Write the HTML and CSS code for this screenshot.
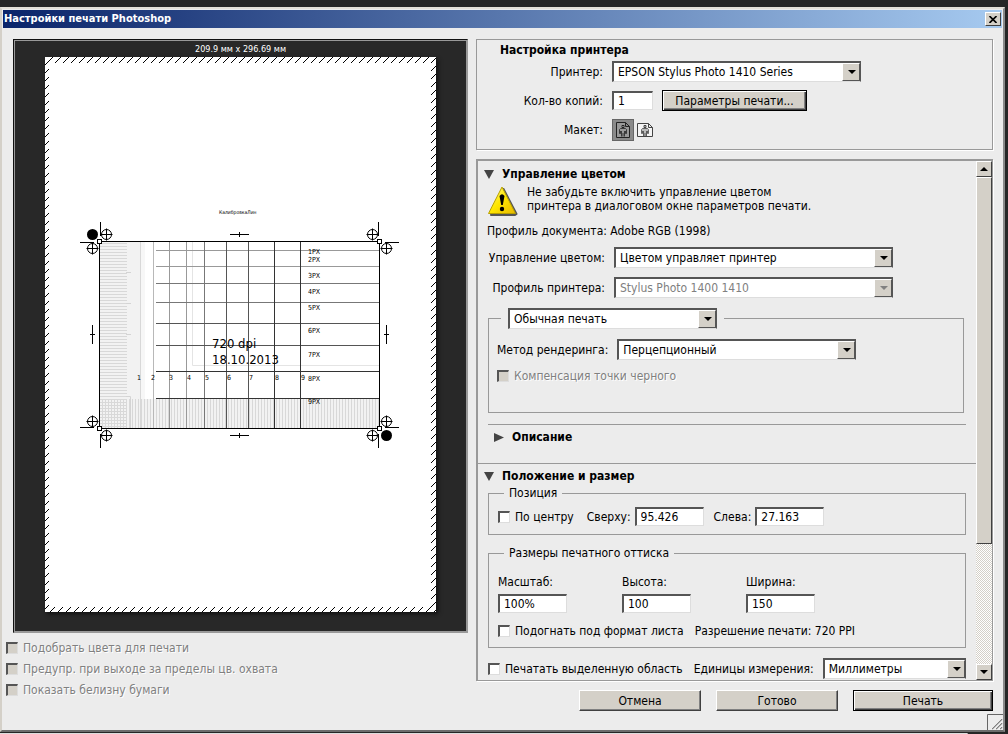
FILE: index.html
```
<!DOCTYPE html>
<html lang="ru">
<head>
    <meta charset="UTF-8">
    <meta name="viewport" content="width=device-width, initial-scale=1.0">
    <title>Настройки печати Photoshop</title>
    <link rel="stylesheet" href="styles.css">
</head>
<body>
    <main class="dialog">
        <header class="titlebar">
            <h1 class="titlebar-text">Настройки печати Photoshop</h1>
            <button class="close-btn" type="button" aria-label="Закрыть">
                <svg width="8" height="7" viewBox="0 0 8 7"><path d="M.5 0L7.500 7M7.500 0L.5 7" stroke="#000" stroke-width="1.600"/></svg>
            </button>
        </header>

        <div class="content">
            <section class="left">
                <div class="preview">
                    <p class="preview-size">209.9 мм x 296.69 мм</p>
                    <svg class="sheet" viewBox="45 57 391 555">
                        <defs>
                            <pattern id="hatch" width="8" height="8" patternUnits="userSpaceOnUse" patternTransform="translate(6 0)">
                                <path d="M-1 9L9 -1M-1 1L1 -1M7 9L9 7" stroke="#000" stroke-width="1"/>
                            </pattern>
                            <pattern id="rows" width="3" height="3" patternUnits="userSpaceOnUse">
                                <path d="M0 .5H3" stroke="#d8d8d8"/>
                            </pattern>
                            <pattern id="cols" width="3" height="3" patternUnits="userSpaceOnUse">
                                <path d="M.5 0V3" stroke="#d8d8d8"/>
                            </pattern>
                            <g id="reg" fill="none" stroke="#000">
                                <circle r="5" fill="#fff"/>
                                <path d="M-6 0H6M0 -6V6"/>
                            </g>
                            <rect id="handle" x="-2" y="-2" width="4" height="4" fill="#fff" stroke="#000"/>
                        </defs>
                        <rect x="45" y="57" width="391" height="555" fill="#fff"/>
                        <path d="M45 57H436V612H45ZM49 63V607H431V63Z" fill="url(#hatch)" fill-rule="evenodd"/>
                        <text x="219" y="214" font-size="5">КалибровкаЛин</text>

                        <!-- test chart -->
                        <rect x="100" y="242" width="41" height="157" fill="#f2f2f2"/>
                        <rect x="141" y="242" width="4" height="157" fill="#f7f7f7"/>
                        <rect x="100" y="399" width="280" height="30" fill="#f2f2f2"/>
                        <rect x="100" y="242" width="27" height="187" fill="url(#rows)"/>
                        <rect x="100" y="399" width="280" height="30" fill="url(#cols)"/>
                        <path d="M126 272.5H131M126 303.5H131M126 334.5H131M126 396.5H130.5V428" fill="none" stroke="#d4d4d4"/>
                        <path d="M192.500 242V365.500H379" fill="none" stroke="#e4e4e4"/>
                        <path d="M140.500 242V428" stroke="#d8d8d8"/>
                        <path d="M153.500 242V428" stroke="#b8b8b8"/>
                        <path d="M169.500 242V428M186.500 242V428M156 250.500H379M156 266.500H379" stroke="#999"/>
                        <path d="M204.500 242V428M156 283.500H379M156 302.500H379" stroke="#777"/>
                        <path d="M226.500 242V428M248.500 242V428M156 323.500H379M156 345.500H379" stroke="#555"/>
                        <path d="M274.500 242V428M300.500 242V428M156 371.500H379M156 398.500H379" stroke="#333"/>
                        <g font-size="7">
                            <text x="308" y="254">1PX</text>
                            <text x="308" y="262">2PX</text>
                            <text x="308" y="278">3PX</text>
                            <text x="308" y="294">4PX</text>
                            <text x="308" y="310">5PX</text>
                            <text x="308" y="333">6PX</text>
                            <text x="308" y="357">7PX</text>
                            <text x="308" y="381">8PX</text>
                            <text x="308" y="404">9PX</text>
                            <text x="137" y="380">1</text>
                            <text x="151" y="380">2</text>
                            <text x="169" y="380">3</text>
                            <text x="187" y="380">4</text>
                            <text x="205" y="380">5</text>
                            <text x="227" y="380">6</text>
                            <text x="249" y="380">7</text>
                            <text x="275" y="380">8</text>
                            <text x="301" y="380">9</text>
                        </g>
                        <g font-size="13">
                            <text x="212" y="348">720 dpi</text>
                            <text x="212" y="364">18.10.2013</text>
                        </g>
                        <rect x="99.500" y="241.500" width="280" height="187" fill="none" stroke="#000"/>

                        <!-- crop and registration marks -->
                        <path d="M100.500 222V236M80 242.500H94M378.500 222V236M385 242.500H399M100.500 434V448M80 427.500H94M378.500 434V448M385 427.500H399" stroke="#000"/>
                        <path d="M230 234.500H249M239.500 232V237M230 435.500H249M239.500 433V438M92.500 325V344M90 334.500H95M386.500 325V344M384 334.500H389" stroke="#000"/>
                        <circle cx="92.500" cy="234.500" r="5.500"/>
                        <circle cx="386.500" cy="435.500" r="5.500"/>
                        <use href="#reg" x="106.500" y="234.500"/>
                        <use href="#reg" x="92.500" y="248.500"/>
                        <use href="#reg" x="372.500" y="234.500"/>
                        <use href="#reg" x="386.500" y="248.500"/>
                        <use href="#reg" x="92.500" y="421.500"/>
                        <use href="#reg" x="106.500" y="435.500"/>
                        <use href="#reg" x="386.500" y="421.500"/>
                        <use href="#reg" x="372.500" y="435.500"/>
                        <use href="#handle" x="99.500" y="241.500"/>
                        <use href="#handle" x="379.500" y="241.500"/>
                        <use href="#handle" x="99.500" y="428.500"/>
                        <use href="#handle" x="379.500" y="428.500"/>
                    </svg>
                </div>
                <div class="proof">
                    <label class="check disabled"><input type="checkbox" disabled>Подобрать цвета для печати</label>
                    <label class="check disabled"><input type="checkbox" disabled>Предупр. при выходе за пределы цв. охвата</label>
                    <label class="check disabled"><input type="checkbox" disabled>Показать белизну бумаги</label>
                </div>
            </section>

            <section class="right">
                <div class="printer">
                    <h2 class="heading printer-title">Настройка принтера</h2>
                    <div class="printer-row">
                        <label class="printer-label" for="printer">Принтер:</label>
                        <span class="select wide"><select id="printer"><option>EPSON Stylus Photo 1410 Series</option></select></span>
                    </div>
                    <div class="printer-row">
                        <label class="printer-label" for="copies">Кол-во копий:</label>
                        <input class="field copies" id="copies" type="text" value="1">
                        <button class="btn default params" type="button">Параметры печати...</button>
                    </div>
                    <div class="printer-row">
                        <span class="printer-label">Макет:</span>
                        <div class="layout-btns">
                            <button class="layout-btn active" type="button" aria-label="Книжная">
                                <svg width="14" height="16" viewBox="0 0 14 16" fill="none" stroke="#222">
                                    <path d="M.5 .5H9.500L13.500 4.500V15.500H.5ZM9.500 .5V4.500H13.500" fill="#999"/>
                                    <path d="M6 3.500H8V5.500H6Z" fill="#ccc"/>
                                    <path d="M4.500 6.500H9.500L10.500 7.500V11.500H9.500V9M3.500 7.500L4.500 6.500M3.500 7.500V11.500H4.500V9M5.500 9V14.500M8.500 9V14.500M7 11V14.500" stroke-width=".8"/>
                                </svg>
                            </button>
                            <button class="layout-btn" type="button" aria-label="Альбомная">
                                <svg width="16" height="14" viewBox="0 0 16 14" fill="none" stroke="#444">
                                    <path d="M.5 .5H11.500L15.500 4.500V13.500H.5ZM11.500 .5V4.500H15.500" fill="#f4f4f4"/>
                                    <path d="M7 2.500H9V4.500H7Z" fill="#ccc"/>
                                    <path d="M5 5.500H11V10H10V13H6V10H5Z" fill="#bbb" stroke="none"/>
                                    <path d="M5.500 5.500H10.500L11.500 6.500V10.500H10.500V8M4.500 6.500L5.500 5.500M4.500 6.500V10.500H5.500V8M6.500 8V13M9.500 8V13M8 10V13" stroke-width=".8"/>
                                </svg>
                            </button>
                        </div>
                    </div>
                </div>

                <div class="panel">
                    <div class="panel-body">
                        <h2 class="heading toggle"><svg width="10" height="9" viewBox="0 0 10 9"><path d="M0 0H10L5 9Z" fill="#444"/></svg>Управление цветом</h2>
                        <div class="warning">
                            <svg width="32" height="32" viewBox="0 0 32 32">
                                <defs>
                                    <linearGradient id="warn" x1="0" y1="0" x2="1" y2="1">
                                        <stop offset="0" stop-color="#fffb90"/>
                                        <stop offset=".5" stop-color="#ffe600"/>
                                        <stop offset="1" stop-color="#e8b800"/>
                                    </linearGradient>
                                </defs>
                                <path d="M16.500 4L29.500 29L28 30H4Z" fill="#555" stroke="#555" stroke-width="2" stroke-linejoin="round"/>
                                <path d="M15 2L28.500 28.500H1.500Z" fill="url(#warn)" stroke="#b8a000" stroke-width="1" stroke-linejoin="round"/>
                                <path d="M12.500 11Q15 7.500 17.500 11L15.800 20H14.200Z" fill="#000"/>
                                <circle cx="15" cy="24" r="2.200"/>
                            </svg>
                            <p>Не забудьте включить управление цветом<br>принтера в диалоговом окне параметров печати.</p>
                        </div>
                        <p class="profile">Профиль документа: Adobe RGB (1998)</p>
                        <div class="color-row">
                            <label class="color-label" for="color">Управление цветом:</label>
                            <span class="select color-select"><select id="color"><option>Цветом управляет принтер</option></select></span>
                        </div>
                        <div class="color-row">
                            <label class="color-label" for="profile">Профиль принтера:</label>
                            <span class="select color-select off"><select id="profile" disabled><option>Stylus Photo 1400 1410</option></select></span>
                        </div>
                        <fieldset class="group mode">
                            <legend><span class="select mode-select"><select aria-label="Режим печати"><option>Обычная печать</option></select></span></legend>
                            <div class="mode-row">
                                <label for="render">Метод рендеринга:</label>
                                <span class="select render-select"><select id="render"><option>Перцепционный</option></select></span>
                            </div>
                            <label class="check disabled"><input type="checkbox" disabled>Компенсация точки черного</label>
                        </fieldset>
                        <h3 class="heading toggle description"><svg width="10" height="9" viewBox="0 0 10 9"><path d="M0 0V9L10 4.500Z" fill="#444"/></svg>Описание</h3>

                        <h2 class="heading toggle second"><svg width="10" height="9" viewBox="0 0 10 9"><path d="M0 0H10L5 9Z" fill="#444"/></svg>Положение и размер</h2>
                        <fieldset class="group position">
                            <legend>Позиция</legend>
                            <div class="position-row">
                                <label class="check"><input type="checkbox">По центру</label>
                                <label class="inline">Сверху:<input class="field" type="text" value="95.426"></label>
                                <label class="inline">Слева:<input class="field" type="text" value="27.163"></label>
                            </div>
                        </fieldset>
                        <fieldset class="group size">
                            <legend>Размеры печатного оттиска</legend>
                            <div class="size-row">
                                <label class="stack">Масштаб:<input class="field" type="text" value="100%"></label>
                                <label class="stack">Высота:<input class="field" type="text" value="100"></label>
                                <label class="stack">Ширина:<input class="field" type="text" value="150"></label>
                            </div>
                            <div class="fit-row">
                                <label class="check"><input type="checkbox">Подогнать под формат листа</label>
                                <span>Разрешение печати: 720 PPI</span>
                            </div>
                        </fieldset>
                        <div class="units-row">
                            <label class="check"><input type="checkbox">Печатать выделенную область</label>
                            <label class="units-label" for="units">Единицы измерения:</label>
                            <span class="select units-select"><select id="units"><option>Миллиметры</option></select></span>
                        </div>
                    </div>
                    <div class="scrollbar">
                        <button class="scroll-btn up" type="button" aria-label="Вверх"></button>
                        <div class="thumb"></div>
                        <div class="track"></div>
                        <button class="scroll-btn down" type="button" aria-label="Вниз"></button>
                    </div>
                </div>

                <div class="actions">
                    <button class="btn" type="button">Отмена</button>
                    <button class="btn" type="button">Готово</button>
                    <button class="btn default print" type="button">Печать</button>
                </div>
            </section>
        </div>

        <svg class="grip" width="16" height="16" viewBox="0 0 16 16">
            <path d="M.5 16V.5H16" fill="none" stroke="#666"/>
            <path d="M5 15L15 5M9 15L15 9M13 15L15 13" stroke="#808080" stroke-width="1.500"/>
            <path d="M4 15L15 4M8 15L15 8M12 15L15 12" stroke="#fff" stroke-width=".7"/>
        </svg>
    </main>
</body>
</html>
```
FILE: styles.css
```
* {
    margin: 0;
    padding: 0;
    box-sizing: border-box;
}

body {
    height: 100vh;
    padding: 7px 3px 2px 0;
    background: linear-gradient(#ddd, #ddd) 0 100% / 96% 1px no-repeat #262626;
    color: #000;
    font-family: "DejaVu Sans Condensed", "DejaVu Sans", sans-serif;
    font-size: 12px;
    line-height: 14px;
    overflow: hidden;
}

input,
select,
button {
    font: inherit;
    color: inherit;
    border-radius: 0;
}

.dialog {
    position: relative;
    display: flex;
    flex-direction: column;
    height: 100%;
    padding: 1px;
    background: #ececec;
    border: 2px solid;
    border-color: #e4e0d8 #8a8a8a #6c6c6c #d4d0c8;
}

.titlebar {
    display: flex;
    align-items: center;
    justify-content: space-between;
    height: 18px;
    padding: 0 1px;
    background: linear-gradient(90deg, #0a246a, #a6caf0);
}

.titlebar-text {
    color: #fff;
    font-size: 11px;
    font-weight: bold;
}

.close-btn {
    display: flex;
    align-items: center;
    justify-content: center;
    width: 16px;
    height: 14px;
    background: #d4d0c8;
    border: 1px solid;
    border-color: #fff #404040 #404040 #fff;
}

.content {
    flex: 1;
    display: grid;
    grid-template-columns: 462fr 517fr;
    gap: 8px;
    min-height: 0;
    padding: 11px 9px 18px 3px;
}

/* Preview */
.left {
    display: flex;
    flex-direction: column;
}

.preview {
    margin-left: 7px;
    padding: 1px 30px 19px;
    background: #282828;
    border: 2px solid;
    border-color: #111 #999 #999 #111;
    outline: 1px solid #999;
    outline-offset: -2px;
}

.preview-size {
    height: 15px;
    color: #fff;
    font-size: 9px;
    text-align: center;
}

.sheet {
    display: block;
    width: 100%;
    box-shadow: 2px 2px 4px #111;
}

.proof {
    display: flex;
    flex-direction: column;
    gap: 7px;
    margin-top: 8px;
}

/* Controls */
.check {
    display: flex;
    align-items: center;
    gap: 5px;
    white-space: nowrap;
}

.check input {
    appearance: none;
    width: 12px;
    height: 12px;
    background: #fff;
    border: 1px solid;
    border-width: 2px 1px 1px 2px;
    border-color: #555 #ddd #ddd #555;
}

.disabled {
    color: #808080;
    text-shadow: 1px 1px #fff;
}

.check.disabled input {
    background: #d4d0c8;
}

.field {
    width: 69px;
    height: 19px;
    padding: 0 4px;
    background: #fff;
    border: 1px solid;
    border-width: 2px 1px 1px 2px;
    border-color: #555 #ddd #ddd #555;
}

.select {
    position: relative;
    display: block;
}

.select select {
    appearance: none;
    display: block;
    width: 100%;
    height: 21px;
    padding: 0 20px 0 4px;
    background: #fff;
    border: 1px solid;
    border-width: 2px 1px 1px 2px;
    border-color: #555 #555 #ddd #555;
}

.select::before {
    content: "";
    position: absolute;
    top: 2px;
    right: 1px;
    bottom: 1px;
    width: 16px;
    background: #d4d0c8;
    border: 1px solid;
    border-color: #fff #555 #555 #fff;
    pointer-events: none;
}

.select::after {
    content: "";
    position: absolute;
    top: 9px;
    right: 5px;
    border: 4px solid transparent;
    border-top-color: #000;
    border-bottom: 0;
    pointer-events: none;
}

.off select {
    color: #808080;
    opacity: 1;
}

.off::after {
    border-top-color: #808080;
}

.btn {
    width: 122px;
    height: 21px;
    background: #d4d0c8;
    border: 1px solid;
    border-color: #fff #404040 #404040 #fff;
    box-shadow: inset -1px -1px #808080;
}

.default {
    border-color: #000;
    box-shadow: inset 1px 1px #fff, inset -1px -1px #404040, inset -2px -2px #808080;
}

.heading {
    font-size: 12px;
    font-weight: bold;
}

/* Printer setup */
.right {
    display: flex;
    flex-direction: column;
    min-width: 0;
    min-height: 0;
}

.printer {
    display: flex;
    flex-direction: column;
    gap: 8px;
    padding: 3px 0 9px;
    border: 1px solid #999;
    box-shadow: 1px 1px #fff;
}

.printer-title {
    height: 10px;
    padding-left: 23px;
}

.printer-row {
    display: flex;
    align-items: center;
    gap: 9px;
    height: 21px;
}

.printer-label {
    width: 126px;
    text-align: right;
}

.wide {
    width: 249px;
}

.copies {
    width: 41px;
}

.params {
    width: 145px;
}

.layout-btns {
    display: flex;
    align-items: center;
}

.layout-btn {
    display: flex;
    align-items: center;
    justify-content: center;
    width: 22px;
    height: 22px;
    background: none;
    border: 0;
}

.active {
    background: #8a8a8a;
    border: 1px solid #666;
}

/* Scrolling panel */
.panel {
    flex: 1;
    display: flex;
    min-height: 0;
    margin-top: 9px;
    border: 1px solid #999;
    border-width: 2px 1px 1px 2px;
    box-shadow: 1px 1px #fff;
}

.panel-body {
    flex: 1;
    min-width: 0;
    padding-top: 6px;
    overflow: hidden;
}

.toggle {
    display: flex;
    align-items: center;
    gap: 8px;
    padding-left: 6px;
}

.warning {
    display: flex;
    gap: 8px;
    padding: 4px 0 0 9px;
}

.profile {
    padding: 7px 0 9px 9px;
}

.color-row {
    display: flex;
    align-items: center;
    gap: 9px;
    margin-bottom: 9px;
}

.color-label {
    width: 127px;
    text-align: right;
}

.color-select {
    width: 279px;
}

.group {
    margin: 0 10px;
    border: 1px solid #999;
}

.mode {
    margin: 10px 12px 11px 10px;
    padding: 10px 8px 29px;
}

.mode legend {
    margin-left: 4px;
    padding: 0 7px;
}

.mode-select {
    width: 209px;
}

.mode-row {
    display: flex;
    align-items: center;
    gap: 9px;
    margin-bottom: 9px;
}

.render-select {
    width: 239px;
}

.description {
    margin: 0 10px;
    padding: 5px 0 19px 6px;
    border-top: 1px solid #999;
}

.second {
    padding-top: 5px;
    border-top: 1px solid #999;
}

.position {
    margin-top: 3px;
    padding: 7px 9px 8px;
}

.position legend,
.size legend {
    margin-left: 6px;
    padding: 0 5px;
}

.position-row {
    display: flex;
    align-items: center;
    gap: 10px;
}

.position-row .check {
    margin-right: 3px;
}

.inline {
    display: flex;
    align-items: center;
    gap: 4px;
}

.size {
    margin-top: 11px;
    padding: 15px 9px 9px;
}

.size-row {
    display: flex;
    gap: 55px;
    margin-bottom: 11px;
}

.stack {
    display: flex;
    flex-direction: column;
    gap: 5px;
}

.fit-row {
    display: flex;
    gap: 11px;
}

.units-row {
    display: flex;
    align-items: center;
    padding: 10px 10px 0;
}

.units-label {
    margin: 0 9px 0 11px;
}

.units-select {
    flex: 1;
}

.scrollbar {
    display: flex;
    flex-direction: column;
    width: 16px;
}

.scroll-btn {
    display: flex;
    align-items: center;
    justify-content: center;
    height: 16px;
    background: #d4d0c8;
    border: 1px solid;
    border-color: #fff #404040 #404040 #fff;
}

.scroll-btn::before {
    content: "";
    border: 4px solid transparent;
}

.up::before {
    border-bottom-color: #000;
    border-top: 0;
}

.down::before {
    border-top-color: #000;
    border-bottom: 0;
}

.thumb {
    flex: 366;
    background: #d4d0c8;
    border: 1px solid;
    border-color: #fff #404040 #404040 #fff;
}

.track {
    flex: 120;
    background: repeating-conic-gradient(#fff 0 25%, #d4d0c8 0 50%) 0 0 / 2px 2px;
}

.actions {
    display: flex;
    justify-content: flex-end;
    gap: 15px;
    margin-top: 9px;
}

.print {
    width: 140px;
}

.grip {
    position: absolute;
    right: 0;
    bottom: 0;
}
```
